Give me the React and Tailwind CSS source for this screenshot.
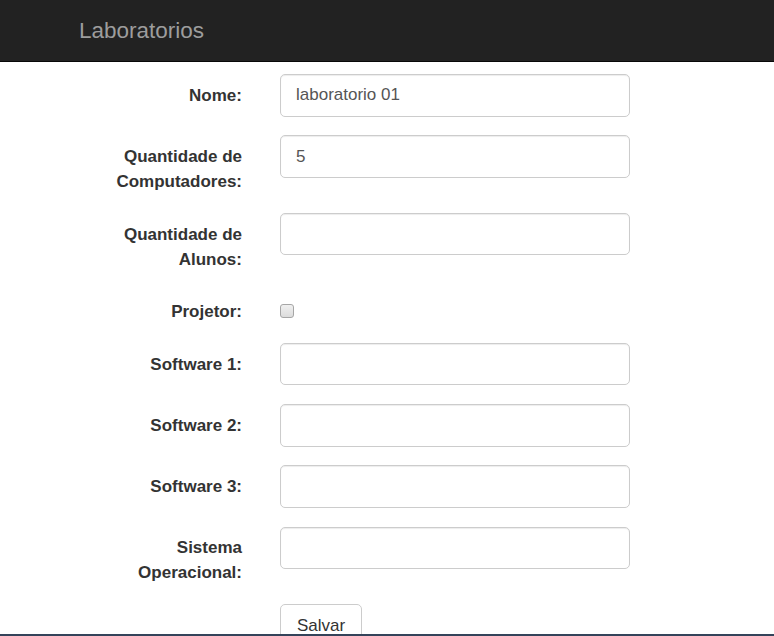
import React, { useState } from 'react';

const fields = [
    { id: 'nome', label: 'Nome:', value: 'laboratorio 01' },
    { id: 'computadores', label: 'Quantidade de Computadores:', value: '5' },
    { id: 'alunos', label: 'Quantidade de Alunos:', value: '' },
    { id: 'projetor', label: 'Projetor:', type: 'checkbox' },
    { id: 'software1', label: 'Software 1:', value: '' },
    { id: 'software2', label: 'Software 2:', value: '' },
    { id: 'software3', label: 'Software 3:', value: '' },
    { id: 'sistema', label: 'Sistema Operacional:', value: '' },
];

const FormRow = ({ field, value, onChange, checked, onToggle }) => (
    <div className="flex items-start pl-[100px]">
        <label
            htmlFor={field.id}
            className="w-[142px] pt-[8.75px] text-right font-bold leading-[25px] text-[#333]"
        >
            {field.label}
        </label>
        <div className="ml-[38px]">
            {field.type === 'checkbox' ? (
                <button
                    id={field.id}
                    type="button"
                    onClick={onToggle}
                    className="mt-[13.75px] mb-[5px] block h-[14px] w-[14px] rounded-[3px] border border-[#a6a6a6] bg-gradient-to-b from-[#f0f0f0] to-[#dcdcdc]"
                >
                    {checked && <span className="block text-[11px] leading-[12px] text-[#333]">✓</span>}
                </button>
            ) : (
                <input
                    id={field.id}
                    name={field.id}
                    type="text"
                    value={value}
                    onChange={onChange}
                    className="block h-[42.5px] w-[350px] rounded-[5px] border border-[#ccc] bg-white px-[15px] text-[17px] text-[#555] shadow-[inset_0_1px_1px_rgba(0,0,0,0.075)] outline-none"
                />
            )}
        </div>
    </div>
);

export default function App() {
    const [formData, setFormData] = useState(
        Object.fromEntries(fields.map(f => [f.id, f.value || '']))
    );
    const [projetor, setProjetor] = useState(false);

    const handleInputChange = (e) => {
        const { name, value } = e.target;
        setFormData(prev => ({ ...prev, [name]: value }));
    };

    return (
        <div className="h-[636px] overflow-hidden bg-white font-['Liberation_Sans',Arial,sans-serif] text-[17px]">
            <nav className="flex h-[62px] items-center border-b border-[#080808] bg-[#222] pl-[79px]">
                <span className="text-[22.5px] text-[#9d9d9d]">Laboratorios</span>
            </nav>

            <form className="mt-[12px] flex flex-col gap-[18.75px]" onSubmit={e => e.preventDefault()}>
                {fields.map(field => (
                    <FormRow
                        key={field.id}
                        field={field}
                        value={formData[field.id]}
                        onChange={handleInputChange}
                        checked={projetor}
                        onToggle={() => setProjetor(p => !p)}
                    />
                ))}
                <div className="pl-[280px]">
                    <button
                        type="submit"
                        className="h-[42.5px] rounded-[5px] border border-[#ccc] bg-white px-[16px] text-[17px] text-[#333]"
                    >
                        Salvar
                    </button>
                </div>
            </form>

            {/* strip at the bottom edge of the window */}
            <div className="fixed bottom-0 left-0 h-[2px] w-full bg-[#34435a]" />
        </div>
    );
}
